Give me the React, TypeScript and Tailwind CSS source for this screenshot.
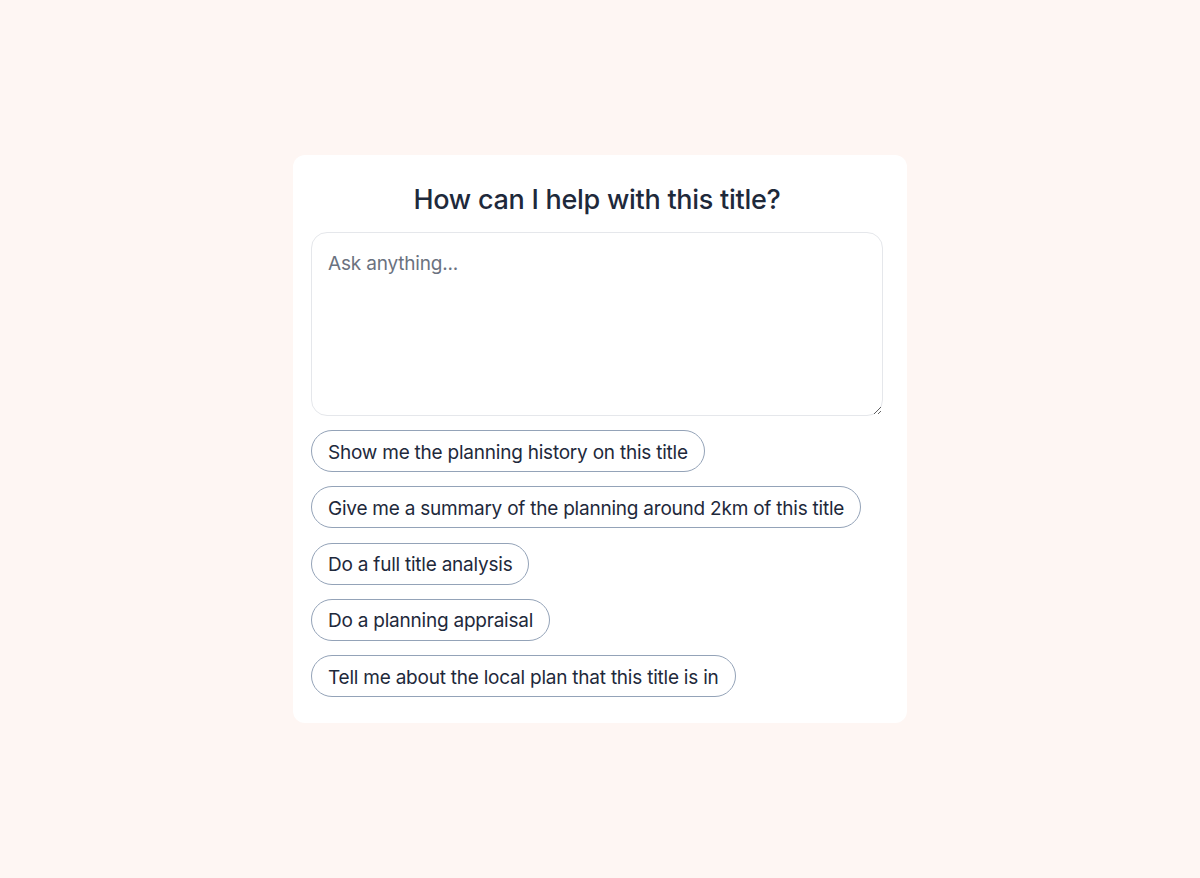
import { useState } from "react";

const suggestions = [
  "Show me the planning history on this title",
  "Give me a summary of the planning around 2km of this title",
  "Do a full title analysis",
  "Do a planning appraisal",
  "Tell me about the local plan that this title is in",
];

export default function App() {
  const [prompt, setPrompt] = useState("");

  return (
    <div
      className="flex min-h-[878px] w-full items-start justify-center bg-[#fef6f3] pt-[155px]"
      style={{ fontFamily: "Inter, 'Noto Sans', sans-serif" }}
    >
      <section className="flex w-[614px] flex-col rounded-xl bg-white pb-[26px] pl-[18px] pr-[24px] pt-[28px]">
        <h2 className="text-center text-[27px] font-medium leading-[34px] tracking-[-0.01em] text-[#1e293b]">
          How can I help with this title?
        </h2>
        <textarea
          value={prompt}
          onChange={(e) => setPrompt(e.target.value)}
          placeholder="Ask anything..."
          className="mt-[15px] h-[184px] w-[572px] rounded-2xl border border-[#e5e7eb] px-4 pb-[18px] pt-[19px] text-[19px] leading-[24px] tracking-[-0.01em] text-[#1e293b] outline-none placeholder:text-[#6b7280]"
        />
        <div className="mt-[14px] flex flex-col items-start gap-[14.3px]">
          {suggestions.map((s) => (
            <button
              key={s}
              type="button"
              onClick={() => setPrompt(s)}
              className="h-[42px] rounded-full border border-[#94a3b8] px-4 pt-[3px] text-[19px] leading-[24px] tracking-[-0.012em] text-[#1e293b]"
            >
              {s}
            </button>
          ))}
        </div>
      </section>
    </div>
  );
}
